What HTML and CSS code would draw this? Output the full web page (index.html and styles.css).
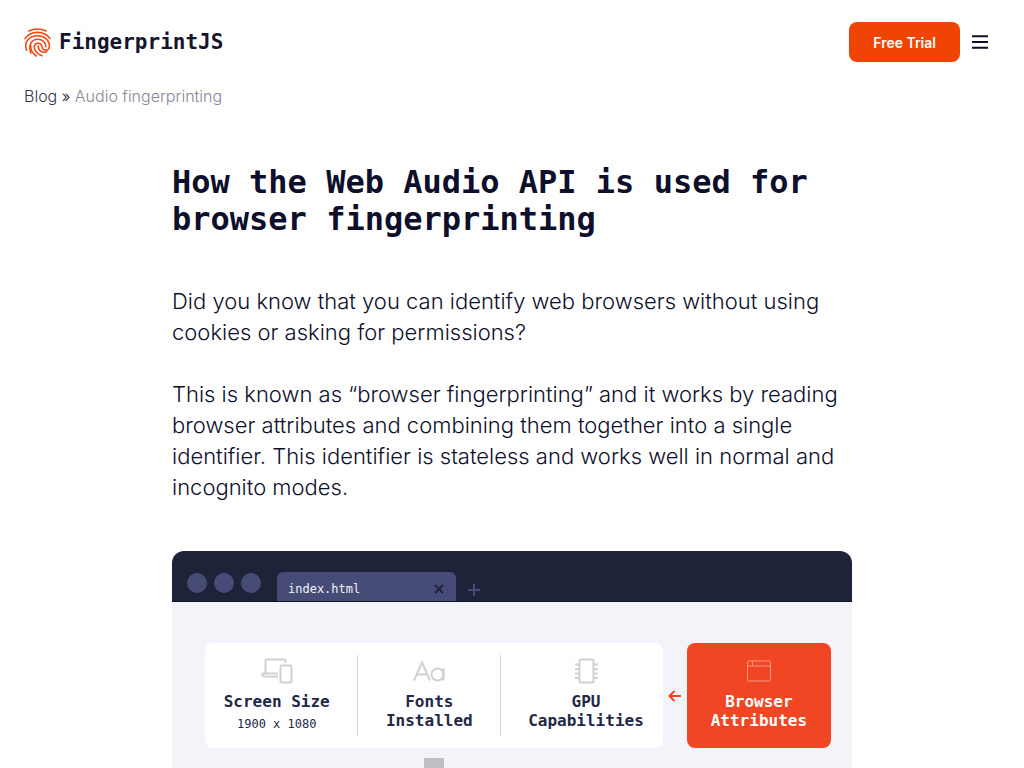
FILE: index.html
```html
<!DOCTYPE html>
<html lang="en">
<head>
<meta charset="utf-8">
<meta name="viewport" content="width=device-width, initial-scale=1">
<title>How the Web Audio API is used for browser fingerprinting</title>
<link rel="stylesheet" href="styles.css">
</head>
<body>
<header class="header">
  <a class="brand" href="#">
    <svg class="brand-icon" viewBox="0 0 84 90" aria-hidden="true">
      <path d="M15 9Q42-3 69 9"/>
      <path d="M3 33C20 7 64 7 81 33"/>
      <path d="M8 69C-2 42 18 24 42 24C63 24 79 38 79 56C79 73 58 72 56 59C54 44 34 44 32 57C31 71 43 82 56 86"/>
      <path d="M22 78C13 57 21 35 43 35C57 35 68 45 68 58"/>
      <path d="M38 87C25 77 19 66 21 55"/>
      <path d="M44 56C45 72 58 78 71 74"/>
    </svg>
    <span class="brand-name">FingerprintJS</span>
  </a>
  <div class="actions">
    <button class="trial" type="button">Free Trial</button>
    <button class="menu" type="button" aria-label="Menu">
      <svg class="menu-icon" viewBox="0 0 16 14"><path d="M0 1.3H16M0 7H16M0 12.7H16"/></svg>
    </button>
  </div>
</header>
<nav class="crumbs" aria-label="Breadcrumb">
  <a class="crumb-link" href="#">Blog</a> <span>»</span> <span class="crumb-current">Audio fingerprinting</span>
</nav>
<main class="article">
  <h1 class="title">How the Web Audio API is used for browser fingerprinting</h1>
  <p class="text">Did you know that you can identify web browsers without using cookies or asking for permissions?</p>
  <p class="text">This is known as “browser fingerprinting” and it works by reading browser attributes and combining them together into a single identifier. This identifier is stateless and works well in normal and incognito modes.</p>
  <figure class="figure">
    <div class="window-bar">
      <div class="dots"><span class="dot"></span><span class="dot"></span><span class="dot"></span></div>
      <div class="tab">
        <span>index.html</span>
        <svg class="tab-close" viewBox="0 0 10 10" aria-hidden="true"><path d="M1 1L9 9M9 1L1 9"/></svg>
      </div>
      <svg class="tab-add" viewBox="0 0 12 12" aria-hidden="true"><path d="M6 0V12M0 6H12"/></svg>
    </div>
    <div class="window-body">
      <div class="flow">
        <div class="cards">
          <div class="card card-screen">
            <svg class="card-icon" viewBox="0 0 32 26" aria-hidden="true"><path d="M4.500 15.500V2.500Q4.500 1.500 5.500 1.500H23.500Q24.500 1.500 24.500 2.500V5M17 15.500H1.500V17Q1.500 18.500 3 18.500H17"/><rect x="19.500" y="7.500" width="11" height="17" rx="1"/></svg>
            <strong>Screen Size</strong>
            <small class="card-note">1900 x 1080</small>
          </div>
          <div class="card card-fonts">
            <svg class="card-icon" viewBox="0 0 32 26" aria-hidden="true"><path d="M1 22.500L9 4.500L17 22.500M4 16.500H14M30.500 10V22.500"/><circle cx="24.500" cy="16.500" r="6"/></svg>
            <strong>Fonts<br>Installed</strong>
          </div>
          <div class="card card-gpu">
            <svg class="card-icon" viewBox="0 0 32 26" aria-hidden="true"><rect x="9.500" y="1.500" width="14" height="23" rx="1.500"/><path d="M9 6.500H5M9 11H5M9 15.500H5M9 20H5M24 6.500H28M24 11H28M24 15.500H28M24 20H28"/></svg>
            <strong>GPU<br>Capabilities</strong>
          </div>
        </div>
        <svg class="arrow" viewBox="0 0 14 12" aria-hidden="true"><path d="M13 6H2M6.500 1L1.500 6L6.500 11"/></svg>
        <div class="card card-accent">
          <svg class="card-icon" viewBox="0 0 32 26" aria-hidden="true"><rect x="4.500" y="3" width="23" height="20" rx="1.500"/><path d="M4.500 8H27.500M9.500 3V8"/></svg>
          <strong>Browser<br>Attributes</strong>
        </div>
      </div>
      <div class="stem-row"><span class="stem"></span></div>
    </div>
  </figure>
</main>
</body>
</html>
```

FILE: styles.css
```css
* { box-sizing: border-box; }
body {
  margin: 0;
  background: #fff;
  color: #0d0f2b;
  font-family: Inter, "Liberation Sans", sans-serif;
}
a { color: inherit; text-decoration: none; }
button { border: 0; font: inherit; cursor: pointer; }
svg { display: block; fill: none; stroke: currentColor; }

.header {
  display: flex;
  align-items: center;
  justify-content: space-between;
  padding: 22px 36px 22px 24px;
}
.brand { display: flex; align-items: center; gap: 8px; }
.brand-icon { width: 27px; height: 29px; overflow: visible; color: #f04a14; stroke-width: 5; stroke-linecap: round; }
.brand-name {
  color: #15152f;
  font: bold 21px/28px "DejaVu Sans Mono", monospace;
}
.actions { display: flex; align-items: center; gap: 12px; }
.trial {
  height: 40px;
  padding: 0 24px;
  border-radius: 8px;
  background: #f04405;
  color: #fff;
  font-size: 14px;
  font-weight: 600;
}
.menu { padding: 0; background: none; color: #0d0f2b; }
.menu-icon { width: 16px; height: 14px; stroke-width: 2; }

.crumbs {
  padding: 2px 24px;
  font-size: 16px;
  font-weight: 300;
  line-height: 20px;
}
.crumb-link { color: #34364f; }
.crumb-current { color: #858895; }

.article { max-width: 728px; margin: 0 auto; padding: 56px 24px 0; }
.title {
  margin: 0 0 48px;
  font: bold 32px/37px "DejaVu Sans Mono", monospace;
}
.text {
  margin: 0 0 31px;
  font-size: 22px;
  font-weight: 300;
  line-height: 31px;
}
.figure { margin: 48px 0 0; overflow: hidden; border-radius: 12px 12px 0 0; background: #f4f3f9; }
.window-bar {
  display: flex;
  align-items: flex-end;
  height: 51px;
  padding-left: 15px;
  border-bottom: 1px solid #10142c;
  background: #1e2339;
}
.dots { display: flex; gap: 7px; padding-bottom: 8px; }
.dot { width: 20px; height: 20px; border-radius: 50%; background: #474c77; }
.tab {
  display: flex;
  align-items: center;
  justify-content: space-between;
  width: 179px;
  height: 29px;
  margin-left: 16px;
  padding: 4px 12px 0 11px;
  border-radius: 6px 6px 0 0;
  background: #474c77;
  color: #f2f2f5;
  font: 12px/16px "DejaVu Sans Mono", monospace;
}
.tab-close { width: 10px; height: 10px; color: #1e2339; stroke-width: 2; }
.tab-add { width: 12px; height: 12px; margin: 0 0 5px 12px; color: #474c77; stroke-width: 2; }

.window-body { padding: 41px 21px 0 33px; }
.flow { display: flex; align-items: stretch; gap: 5px; }
.cards {
  display: flex;
  flex: 457;
  padding: 12px 0;
  border-radius: 8px;
  background: #fff;
}
.card {
  display: flex;
  flex-direction: column;
  align-items: center;
  padding: 3px 0 4px;
  color: #222846;
  font: bold 16px/19px "DejaVu Sans Mono", monospace;
  text-align: center;
}
.card + .card { border-left: 1px solid #d9d7d9; }
.card-screen { width: 33.3%; padding-right: 9px; }
.card-fonts { width: 31.2%; }
.card-gpu { width: 35.5%; padding-left: 8px; }
.card-icon { width: 32px; height: 26px; margin-bottom: 8px; color: #d3d0d2; stroke-width: 2; }
.card-note { margin-top: 5px; font-size: 12px; font-weight: normal; line-height: 16px; }
.arrow { align-self: center; width: 14px; height: 12px; color: #f04623; stroke-width: 2; }
.card-accent {
  flex: 144;
  padding: 15px 0 16px;
  border-radius: 8px;
  background: #f04623;
  color: #fff;
}
.card-accent .card-icon { color: #f99a82; stroke-width: 1; }
.stem-row { display: flex; width: 457px; max-width: 100%; justify-content: center; padding-top: 10px; }
.stem { width: 20px; height: 10px; background: #bfbfc1; }
```
